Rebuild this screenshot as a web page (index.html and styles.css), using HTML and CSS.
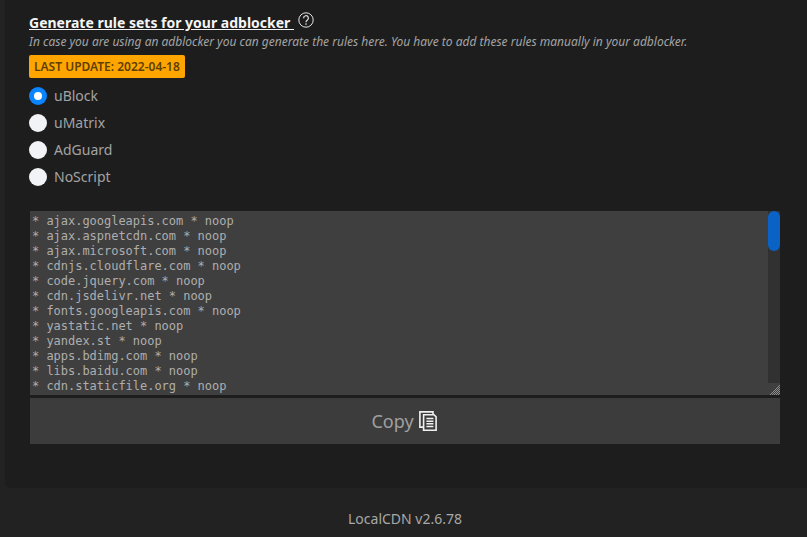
FILE: index.html
```html
<!DOCTYPE html>
<html lang="en">
<head>
<meta charset="utf-8">
<title>LocalCDN</title>
<link rel="stylesheet" href="styles.css">
</head>
<body>
<main class="panel">
  <div class="heading-row">
    <h2 class="heading">Generate rule sets for your adblocker&nbsp;</h2>
    <svg class="help" width="16" height="16" viewBox="0 0 16 16" aria-hidden="true">
      <circle cx="8" cy="8" r="7.2" fill="none" stroke="#e4e4e4" stroke-width="1"/>
      <path d="M5.6 6.2a2.4 2.4 0 1 1 3.6 2C8.4 8.7 8 9.1 8 10.2" fill="none" stroke="#e4e4e4" stroke-width="1.2"/>
      <circle cx="8" cy="12.1" r=".8" fill="#e4e4e4"/>
    </svg>
  </div>
  <p class="note">In case you are using an adblocker you can generate the rules here. You have to add these rules manually in your adblocker.</p>
  <div class="badge">LAST UPDATE: 2022-04-18</div>
  <ul class="options">
    <li class="option"><span class="radio radio-on"></span>uBlock</li>
    <li class="option"><span class="radio"></span>uMatrix</li>
    <li class="option"><span class="radio"></span>AdGuard</li>
    <li class="option"><span class="radio"></span>NoScript</li>
  </ul>
  <div class="rules">
    <pre class="rules-text">* ajax.googleapis.com * noop
* ajax.aspnetcdn.com * noop
* ajax.microsoft.com * noop
* cdnjs.cloudflare.com * noop
* code.jquery.com * noop
* cdn.jsdelivr.net * noop
* fonts.googleapis.com * noop
* yastatic.net * noop
* yandex.st * noop
* apps.bdimg.com * noop
* libs.baidu.com * noop
* cdn.staticfile.org * noop</pre>
    <div class="scrollbar"><div class="track"><div class="thumb"></div></div><div class="resizer"></div></div>
  </div>
  <div class="copy">Copy
    <svg class="copy-icon" width="18" height="20" viewBox="0 0 18 20" aria-hidden="true">
      <path d="M14 3V.9H.9v15.2h3.6" fill="none" stroke="#f0f0f0" stroke-width="1.6"/>
      <path d="M4.6 3.8h10.4l2.1 2.1v13.3H4.6z" fill="#3c3c3c" stroke="#f0f0f0" stroke-width="1.6"/>
      <path d="M7.4 7.6h7M7.4 10.2h7M7.4 12.8h7M7.4 15.4h7" stroke="#f0f0f0" stroke-width="1.5"/>
    </svg>
  </div>
</main>
<footer class="footer">LocalCDN v2.6.78</footer>
</body>
</html>
```
FILE: styles.css
```css
* { box-sizing: border-box; }
html, body { margin: 0; height: 537px; overflow: hidden; }
body { background: #222222; font-family: "Noto Sans", sans-serif; color: #a8a8a8; }
.panel {
  margin-left: 5px;
  height: 488px;
  padding: 13px 26px 0 24px;
  background: #1d1d1d;
  border-bottom-left-radius: 6px;
}
.heading-row { display: flex; align-items: flex-start; height: 20px; }
.heading {
  margin: 0;
  font-size: 14px;
  line-height: 20px;
  height: 18px;
  font-weight: 700;
  color: #f4f4f4;
  text-decoration: underline;
}
.help { margin: -1px 0 0 4px; }
.note {
  margin: 1px 0 0;
  font-size: 12px;
  line-height: 16px;
  font-style: italic;
  color: #a4a4a4;
  white-space: nowrap;
}
.badge {
  display: inline-block;
  margin-top: 5px;
  height: 23px;
  padding: 0 5px;
  font-size: 12px;
  line-height: 23px;
  font-weight: 600;
  color: #5e3f00;
  background: #ffa500;
  border-radius: 2px;
}
.options { list-style: none; margin: 9px 0 0; padding: 0; display: flex; flex-direction: column; gap: 9px; }
.option { display: flex; align-items: center; gap: 7px; height: 18px; font-size: 14px; line-height: 18px; color: #a3a3a3; }
.radio { width: 18px; height: 18px; border-radius: 50%; background: #f1f3f6; }
.radio-on { background: #0a84ff; position: relative; }
.radio-on::after { content: ""; position: absolute; left: 5px; top: 5px; width: 8px; height: 8px; border-radius: 50%; background: #fff; }
.rules { display: flex; margin: 25px 0 0 1px; width: 750px; height: 184px; background: #3f3f3f; }
.rules-text {
  flex: 1;
  margin: 0;
  padding: 3px 2px 0;
  overflow: hidden;
  font-family: "DejaVu Sans Mono", monospace;
  font-size: 12px;
  letter-spacing: -0.024px;
  line-height: 15px;
  color: #aeaeae;
}
.scrollbar { position: relative; width: 12px; display: flex; flex-direction: column; }
.track { height: 172px; background: #313131; }
.thumb { width: 12px; height: 40px; border-radius: 6px; background: #0a62c4; }
.resizer {
  position: absolute; right: 0; bottom: 0; width: 11px; height: 11px;
  background: repeating-conic-gradient(#8c8c8c 0 25%, #3f3f3f 0 50%) 0 0 / 2px 2px;
  clip-path: polygon(100% 0, 100% 100%, 0 100%);
}
.copy {
  display: flex; align-items: center; justify-content: center; gap: 5px;
  margin: 3px 0 0 1px;
  width: 750px; height: 46px;
  padding-right: 2px;
  background: #3c3c3c;
  font-size: 18px;
  color: #a0a0a0;
}
.copy-icon { flex: none; }
.footer { margin-top: 21px; padding-left: 3px; text-align: center; font-size: 14px; line-height: 20px; color: #a8a8a8; }
```
